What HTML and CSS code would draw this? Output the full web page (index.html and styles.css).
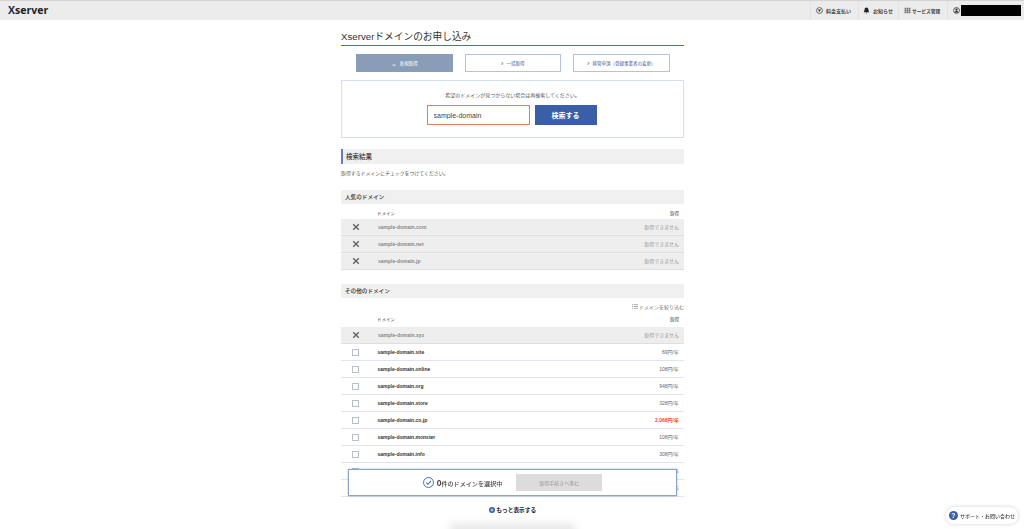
FILE: index.html
```html
<!DOCTYPE html>
<html lang="ja">
<head>
    <meta charset="UTF-8">
    <title>Xserverドメインのお申し込み</title>
    <link rel="stylesheet" href="styles.css">
</head>
<body>
    <header class="topbar">
        <div class="logo"><span class="logo-x">X</span>server</div>
        <nav class="topnav">
            <a class="topnav-item topnav-pay">
                <svg class="topnav-icon" viewBox="0 0 10 10"><circle cx="5" cy="5" r="4.2" fill="none" stroke="#333" stroke-width="1"/><path d="M2.800 3.600h4.400L5 7z" fill="#333"/></svg>
                料金支払い
            </a>
            <a class="topnav-item topnav-news">
                <svg class="topnav-icon" viewBox="0 0 10 10"><path d="M5 .6c-2 0-2.800 1.600-2.800 3.400 0 1.800-.8 2.600-1.200 3.400h8c-.4-.8-1.200-1.600-1.200-3.400C7.800 2.200 7 .6 5 .6zM4 8.200h2a1 1 0 0 1-2 0z" fill="#222"/></svg>
                お知らせ
            </a>
            <a class="topnav-item topnav-service">
                <svg class="topnav-icon" viewBox="0 0 10 10"><path d="M.8 1h2.400v2.400H.8zM3.800 1h2.400v2.400H3.800zM6.800 1h2.400v2.400H6.800zM.8 3.800h2.400v2.400H.8zM3.800 3.800h2.400v2.400H3.800zM6.800 3.800h2.400v2.400H6.800zM.8 6.600h2.400V9H.8zM3.800 6.600h2.400V9H3.800zM6.800 6.600h2.400V9H6.800z" fill="#777"/></svg>
                サービス管理
            </a>
            <a class="topnav-item topnav-user">
                <svg class="topnav-icon" viewBox="0 0 10 10"><circle cx="5" cy="5" r="4.2" fill="none" stroke="#222" stroke-width="1"/><circle cx="5" cy="3.800" r="1.500" fill="#222"/><path d="M2.600 8c.2-1.600 1.200-2.200 2.400-2.200S7.200 6.400 7.400 8z" fill="#222"/></svg>
                <span class="redacted"></span>
            </a>
        </nav>
    </header>

    <main class="content">
        <h1 class="page-title">Xserverドメインのお申し込み</h1>

        <div class="tabs">
            <a class="tab tab-active"><span class="tab-arrow">⌄</span>新規取得</a>
            <a class="tab"><span class="tab-arrow">›</span>一括取得</a>
            <a class="tab"><span class="tab-arrow">›</span>移管申請（登録事業者の変更）</a>
        </div>

        <section class="search-box">
            <p class="search-note">希望のドメインが見つからない場合は再検索してください。</p>
            <div class="search-row">
                <input class="search-input" type="text" value="sample-domain">
                <button class="search-btn">検索する</button>
            </div>
        </section>

        <h2 class="result-title">検索結果</h2>
        <p class="result-note">取得するドメインにチェックをつけてください。</p>

        <h3 class="group-title">人気のドメイン</h3>
        <div class="table-head"><span>ドメイン</span><span>取得</span></div>
        <div class="row row-off">
            <svg class="cross" viewBox="0 0 10 10"><path d="M1.500 1.500l7 7M8.500 1.500l-7 7" stroke="#666" stroke-width="1.800"/></svg>
            <span class="row-name">sample-domain.com</span><span class="row-price">取得できません</span>
        </div>
        <div class="row row-off">
            <svg class="cross" viewBox="0 0 10 10"><path d="M1.500 1.500l7 7M8.500 1.500l-7 7" stroke="#666" stroke-width="1.800"/></svg>
            <span class="row-name">sample-domain.net</span><span class="row-price">取得できません</span>
        </div>
        <div class="row row-off">
            <svg class="cross" viewBox="0 0 10 10"><path d="M1.500 1.500l7 7M8.500 1.500l-7 7" stroke="#666" stroke-width="1.800"/></svg>
            <span class="row-name">sample-domain.jp</span><span class="row-price">取得できません</span>
        </div>

        <h3 class="group-title group-other">その他のドメイン</h3>
        <div class="filter">
            <svg class="filter-icon" viewBox="0 0 8 6"><path d="M0 .5h1.500M2.500 .5H8M0 3h1.500M2.500 3H8M0 5.500h1.500M2.500 5.500H8" stroke="#777" stroke-width=".8"/></svg>
            ドメインを絞り込む
        </div>
        <div class="table-head table-head-other"><span>ドメイン</span><span>取得</span></div>
        <div class="row row-off">
            <svg class="cross" viewBox="0 0 10 10"><path d="M1.500 1.500l7 7M8.500 1.500l-7 7" stroke="#666" stroke-width="1.800"/></svg>
            <span class="row-name">sample-domain.xyz</span><span class="row-price">取得できません</span>
        </div>
        <div class="row"><span class="check"></span><span class="row-name">sample-domain.site</span><span class="row-price">69円/年</span></div>
        <div class="row"><span class="check"></span><span class="row-name">sample-domain.online</span><span class="row-price">108円/年</span></div>
        <div class="row"><span class="check"></span><span class="row-name">sample-domain.org</span><span class="row-price">948円/年</span></div>
        <div class="row"><span class="check"></span><span class="row-name">sample-domain.store</span><span class="row-price">328円/年</span></div>
        <div class="row"><span class="check"></span><span class="row-name">sample-domain.co.jp</span><span class="row-price row-price-hot">2,068円/年</span></div>
        <div class="row"><span class="check"></span><span class="row-name">sample-domain.monster</span><span class="row-price">108円/年</span></div>
        <div class="row"><span class="check"></span><span class="row-name">sample-domain.info</span><span class="row-price">308円/年</span></div>
        <div class="row"><span class="check"></span><span class="row-name">sample-domain.club</span><span class="row-price">108円/年</span></div>
        <div class="row"><span class="check"></span><span class="row-name">sample-domain.biz</span><span class="row-price">108円/年</span></div>

        <a class="more">
            <svg class="more-icon" viewBox="0 0 10 10"><circle cx="5" cy="5" r="5" fill="#3a5ea8"/><path d="M5 2.500v5M2.500 5h5" stroke="#fff" stroke-width="1.200"/></svg>
            もっと表示する
        </a>
    </main>

    <!-- fixed bar over the table -->
    <div class="select-bar">
        <svg class="select-icon" viewBox="0 0 12 12"><circle cx="6" cy="6" r="5.400" fill="none" stroke="#3a5ea8" stroke-width="1"/><path d="M3.400 6l1.900 1.900 3.400-3.600" fill="none" stroke="#3a5ea8" stroke-width="1.100"/></svg>
        <span class="select-text"><b>0</b>件のドメインを選択中</span>
        <button class="select-btn">取得手続きへ進む</button>
    </div>

    <div class="page-shadow"></div>

    <a class="support">
        <span class="support-mark">?</span>
        サポート・お問い合わせ
    </a>
</body>
</html>
```

FILE: styles.css
```css
html, body {
    height: 529px;
    overflow: hidden;
}
body {
    margin: 0;
    background: #fff;
    color: #333;
    font-family: "Liberation Sans", "Noto Sans CJK JP", sans-serif;
}
.topbar {
    display: flex;
    justify-content: space-between;
    height: 19px;
    background: #ececec;
    border-top: 1px solid #d4d4d4;
}
.logo {
    padding-left: 8px;
    font-family: "Open Sans", sans-serif;
    font-size: 10.500px;
    font-weight: 700;
    line-height: 19px;
    color: #222;
}
.logo-x {
    color: #1c2c4c;
}
.topnav {
    display: flex;
}
.topnav-item {
    display: flex;
    align-items: center;
    box-sizing: border-box;
    border-left: 1px solid #e2e2e2;
    font-size: 5px;
    font-weight: 700;
    color: #444;
    white-space: nowrap;
}
.topnav-icon {
    flex: none;
    width: 7px;
    height: 7px;
}
.topnav-pay {
    gap: 3px;
    width: 48px;
    padding-left: 5px;
}
.topnav-news {
    gap: 3px;
    width: 40px;
    padding-left: 4px;
}
.topnav-service {
    gap: 1px;
    width: 49px;
    padding-left: 5px;
    font-size: 4.700px;
}
.topnav-user {
    gap: 1px;
    width: 77px;
    padding-left: 5px;
}
.redacted {
    width: 60px;
    height: 11px;
    background: #000;
}

.content {
    width: 343px;
    margin-left: 341px;
}
.page-title {
    margin: 0;
    padding-top: 11px;
    height: 14px;
    border-bottom: 1px solid #4f6db5;
    font-size: 9.700px;
    font-weight: 400;
    line-height: 11px;
    color: #333;
}
.tabs {
    display: flex;
    gap: 12px;
    margin-top: 8px;
    margin-left: 15px;
}
.tab {
    display: flex;
    align-items: center;
    justify-content: center;
    gap: 3px;
    box-sizing: border-box;
    width: 96.500px;
    height: 18px;
    background: #fff;
    border: 1px solid #b4c2de;
    font-size: 4.500px;
    color: #3d5a99;
}
.tab-active {
    background: #8a9db8;
    border-color: #8a9db8;
    color: #fff;
}
.tab-arrow {
    font-size: 7px;
    line-height: 7px;
}
.search-box {
    box-sizing: border-box;
    height: 58px;
    margin-top: 8px;
    border: 1px solid #d8dfec;
}
.search-note {
    margin: 11px 0 0;
    font-size: 5px;
    line-height: 7px;
    text-align: center;
    color: #555;
}
.search-row {
    display: flex;
    justify-content: center;
    gap: 5px;
    margin-top: 6px;
    padding-right: 2px;
}
.search-input {
    box-sizing: border-box;
    width: 103px;
    height: 20px;
    padding: 0 6px;
    border: 1px solid #e8795c;
    border-radius: 0;
    outline: none;
    font-family: "Liberation Sans", sans-serif;
    font-size: 7px;
    color: #444;
}
.search-btn {
    width: 62px;
    height: 20px;
    padding: 0;
    background: #3a5ea8;
    border: none;
    font-family: inherit;
    font-size: 7px;
    font-weight: 700;
    color: #fff;
}
.result-title {
    box-sizing: border-box;
    height: 15px;
    margin: 11px 0 0;
    padding-left: 3px;
    background: #f0f0f0;
    border-left: 2px solid #5f7fbd;
    font-size: 6.500px;
    font-weight: 500;
    line-height: 16px;
}
.result-note {
    margin: 6px 0 0;
    font-size: 4.900px;
    line-height: 7px;
    color: #555;
}
.group-title {
    box-sizing: border-box;
    height: 14px;
    margin: 13px 0 0;
    padding-left: 4px;
    background: #f0f0f0;
    font-size: 5.600px;
    font-weight: 500;
    line-height: 14px;
}
.group-other {
    margin-top: 14px;
}
.table-head {
    display: flex;
    justify-content: space-between;
    height: 15px;
    padding: 0 5px 0 36px;
    font-size: 4.500px;
    line-height: 20px;
    color: #444;
}
.table-head-other {
    height: 17px;
    line-height: 20px;
}
.row {
    display: flex;
    align-items: center;
    box-sizing: border-box;
    height: 17px;
    padding-right: 5px;
    border-bottom: 1px solid #dfe4ef;
    font-size: 5px;
    color: #333;
}
.row-off {
    background: #eeeeee;
    border-bottom-color: #dcdfe6;
    color: #888;
}
.row-name {
    flex: 1;
    font-weight: 700;
}
.row-price {
    padding-bottom: 2px;
    font-size: 5px;
    color: #666;
}
.row-off .row-price {
    color: #999;
}
.row-price-hot {
    color: #f04a23;
    font-weight: 700;
}
.cross {
    flex: none;
    width: 8px;
    height: 8px;
    margin: 0 18px 0 11px;
}
.check {
    flex: none;
    box-sizing: border-box;
    width: 7px;
    height: 7px;
    margin: 0 18.500px 0 11px;
    background: #fff;
    border: 1px solid #b9bfc9;
}
.filter {
    display: flex;
    align-items: center;
    justify-content: flex-end;
    gap: 1px;
    height: 7px;
    margin-top: 5px;
    font-size: 5px;
    color: #777;
}
.filter-icon {
    width: 6px;
    height: 5px;
}
.more {
    display: flex;
    align-items: center;
    justify-content: center;
    gap: 1.500px;
    margin-top: 8px;
    font-size: 5.700px;
    font-weight: 700;
    color: #222;
}
.more-icon {
    width: 6px;
    height: 6px;
}
.select-bar {
    position: fixed;
    left: 348px;
    top: 469px;
    display: flex;
    align-items: center;
    justify-content: center;
    box-sizing: border-box;
    width: 329px;
    height: 27px;
    background: #fff;
    border: 1px solid #8ea2cc;
    box-shadow: 0 0 2px rgba(60, 80, 130, .4);
}
.select-icon {
    width: 11px;
    height: 11px;
    margin-right: 3px;
}
.select-text {
    font-size: 6.100px;
    font-weight: 500;
    color: #444;
}
.select-text b {
    font-size: 8.500px;
}
.select-btn {
    width: 86px;
    height: 17px;
    margin-left: 14px;
    padding: 0;
    background: #dcdcdc;
    border: none;
    font-family: inherit;
    font-size: 5px;
    color: #999;
}
.page-shadow {
    position: fixed;
    left: 450px;
    top: 524px;
    width: 125px;
    height: 12px;
    background: rgba(0, 0, 0, .1);
    filter: blur(5px);
}
.support {
    position: fixed;
    left: 946px;
    top: 507px;
    display: flex;
    align-items: center;
    gap: 2px;
    box-sizing: border-box;
    width: 72px;
    height: 17px;
    padding-left: 3px;
    background: #fff;
    border-radius: 9px;
    box-shadow: 0 0 4px rgba(0, 0, 0, .18);
    font-size: 5px;
    font-weight: 500;
    color: #444;
}
.support-mark {
    width: 9px;
    height: 9px;
    background: #3a5ea8;
    border-radius: 50%;
    font-size: 7px;
    font-weight: 700;
    line-height: 9px;
    text-align: center;
    color: #fff;
}
```
